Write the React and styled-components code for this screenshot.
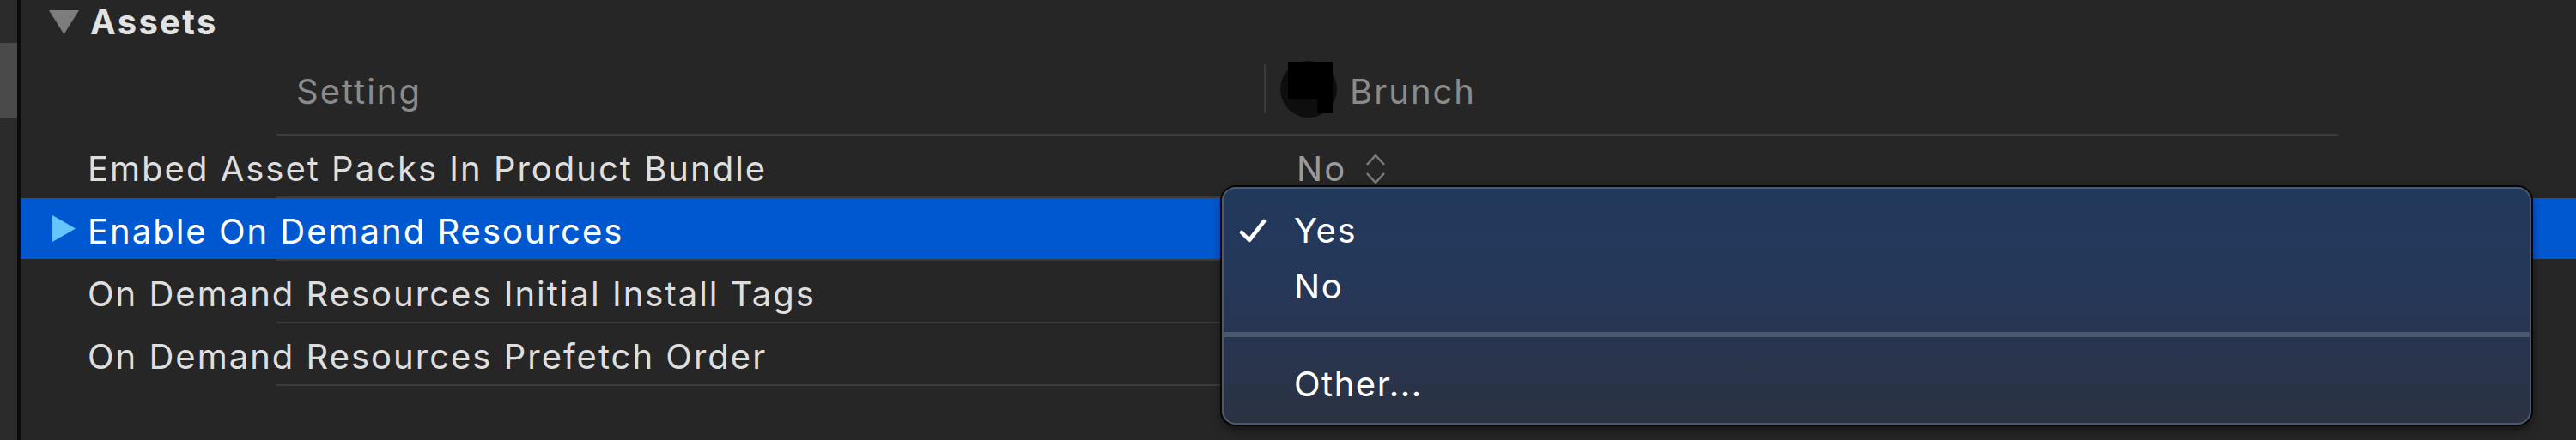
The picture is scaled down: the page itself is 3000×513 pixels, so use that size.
import styled, { createGlobalStyle } from "styled-components";

const GlobalStyle = createGlobalStyle`
  html, body {
    margin: 0;
    padding: 0;
    background: #262626;
  }
  body {
    width: 3000px;
    height: 513px;
    overflow: hidden;
    font-family: "Inter", "Noto Sans", sans-serif;
    -webkit-font-smoothing: antialiased;
  }
`;

const Page = styled.div`
  display: flex;
  width: 3000px;
  height: 513px;
  background: #262626;
`;

const Gutter = styled.div`
  width: 20px;
  flex-shrink: 0;
  background: #2b2b2b;
  border-right: 4px solid #0b0b0b;
  padding-top: 50px;
`;

const GutterThumb = styled.div`
  height: 87px;
  background: #4a4a4a;
`;

const Main = styled.div`
  position: relative;
  flex: 1;
  display: flex;
  flex-direction: column;
`;

const SectionHeader = styled.div`
  height: 50px;
  box-sizing: border-box;
  padding: 2px 0 0 33px;
  display: flex;
  align-items: center;
  gap: 13px;
  font-size: 40px;
  line-height: 48px;
  font-weight: 700;
  letter-spacing: 2.3px;
  color: #e2e2e2;
`;

const ColumnHeader = styled.div`
  height: 106px;
  box-sizing: border-box;
  padding-top: 8px;
  display: grid;
  grid-template-columns: 1448px 1fr;
  align-items: center;
  font-size: 40px;
  line-height: 48px;
  letter-spacing: 2px;
  color: #8b8b8b;
`;

const HeaderLabel = styled.div`
  padding-left: 321px;
`;

const HeaderValue = styled.div`
  display: flex;
  align-items: center;
`;

const ColumnRule = styled.div`
  width: 2px;
  height: 57px;
  margin-top: -8px;
  background: #3a3a3a;
`;

const Redacted = styled.svg`
  margin: -8px 14px 0 16px;
  flex-shrink: 0;
`;

const Divider = styled.div`
  height: 2px;
  margin-left: 298px;
  width: 2401px;
  background: #3b3b3b;
`;

const Row = styled.div`
  height: 71px;
  box-sizing: border-box;
  padding-top: 6px;
  display: grid;
  grid-template-columns: 1448px 1fr;
  align-items: center;
  font-size: 40px;
  line-height: 48px;
  letter-spacing: 2px;
  color: ${(p) => (p.$selected ? "#ffffff" : "#dedede")};
  background: ${(p) => (p.$selected ? "#0058d0" : "transparent")};
`;

const NameCell = styled.div`
  display: flex;
  align-items: center;
  padding-left: 37px;
`;

const Disclosure = styled.div`
  width: 41px;
  display: flex;
  align-items: center;
  margin-top: -6px;
`;

const ValueCell = styled.div`
  display: flex;
  align-items: center;
  gap: 20px;
  padding-left: 38px;
  color: #9a9a9a;
`;

const Popup = styled.div`
  position: absolute;
  left: 1399px;
  top: 218px;
  width: 1525px;
  height: 277px;
  box-sizing: border-box;
  padding: 16px 0 13px;
  display: flex;
  flex-direction: column;
  border: 2px solid #4b5870;
  border-radius: 16px;
  background: linear-gradient(180deg, #21395c 0%, #25385a 35%, #283550 65%, #2b3242 100%);
  box-shadow: 0 0 0 2px #060606, 0 6px 12px rgba(0, 0, 0, 0.55);
  overflow: hidden;
`;

const MenuItem = styled.div`
  height: 65px;
  display: flex;
  align-items: center;
  padding-left: 18px;
  font-size: 40px;
  line-height: 48px;
  letter-spacing: 1.5px;
  color: #ffffff;
`;

const CheckSlot = styled.div`
  width: 64px;
  display: flex;
  align-items: center;
`;

const MenuSeparator = styled.div`
  height: 6px;
  margin: 21px 0 22px;
  background: #4b596e;
`;

const TriangleDown = () => (
  <svg width="35" height="28" viewBox="0 0 35 28">
    <polygon points="0,0 35,0 17.5,28" fill="#7d7d7d" />
  </svg>
);

const TriangleRight = () => (
  <svg width="27" height="31" viewBox="0 0 27 31">
    <polygon points="0,0 27,15.5 0,31" fill="#66c4ff" />
  </svg>
);

const UpDown = () => (
  <svg width="28" height="38" viewBox="0 0 28 38">
    <polyline points="4,14 14,3 24,14" fill="none" stroke="#7c7c7c" strokeWidth="2.5" />
    <polyline points="4,24 14,35 24,24" fill="none" stroke="#7c7c7c" strokeWidth="2.5" />
  </svg>
);

const Check = () => (
  <svg width="32" height="28" viewBox="0 0 32 28">
    <polyline
      points="3,16 12,25 29,3"
      fill="none"
      stroke="#ffffff"
      strokeWidth="4.5"
      strokeLinecap="round"
      strokeLinejoin="round"
    />
  </svg>
);

const rows = [
  { name: "Embed Asset Packs In Product Bundle", value: "No", chooser: true },
  { name: "Enable On Demand Resources", value: "Yes", selected: true },
  { name: "On Demand Resources Initial Install Tags" },
  { name: "On Demand Resources Prefetch Order" },
];

export default function App() {
  return (
    <>
      <GlobalStyle />
      <Page>
        <Gutter>
          <GutterThumb />
        </Gutter>
        <Main>
          <SectionHeader>
            <TriangleDown />
            <span>Assets</span>
          </SectionHeader>
          <ColumnHeader>
            <HeaderLabel>Setting</HeaderLabel>
            <HeaderValue>
              <ColumnRule />
              <Redacted width="68" height="67" viewBox="0 0 68 67">
                <circle cx="34" cy="34" r="33" fill="#0e0e0e" />
                <rect x="10" y="2" width="52" height="44" fill="#000" />
                <rect x="44" y="46" width="18" height="16" fill="#000" />
              </Redacted>
              <span>Brunch</span>
            </HeaderValue>
          </ColumnHeader>
          <Divider />
          {rows.map((r) => (
            <div key={r.name}>
              <Row $selected={r.selected}>
                <NameCell>
                  <Disclosure>{r.selected && <TriangleRight />}</Disclosure>
                  <span>{r.name}</span>
                </NameCell>
                <ValueCell>
                  {r.chooser && (
                    <>
                      <span>{r.value}</span>
                      <UpDown />
                    </>
                  )}
                </ValueCell>
              </Row>
              <Divider />
            </div>
          ))}
          <Popup>
            <MenuItem>
              <CheckSlot>
                <Check />
              </CheckSlot>
              Yes
            </MenuItem>
            <MenuItem>
              <CheckSlot />
              No
            </MenuItem>
            <MenuSeparator />
            <MenuItem>
              <CheckSlot />
              Other...
            </MenuItem>
          </Popup>
        </Main>
      </Page>
    </>
  );
}
